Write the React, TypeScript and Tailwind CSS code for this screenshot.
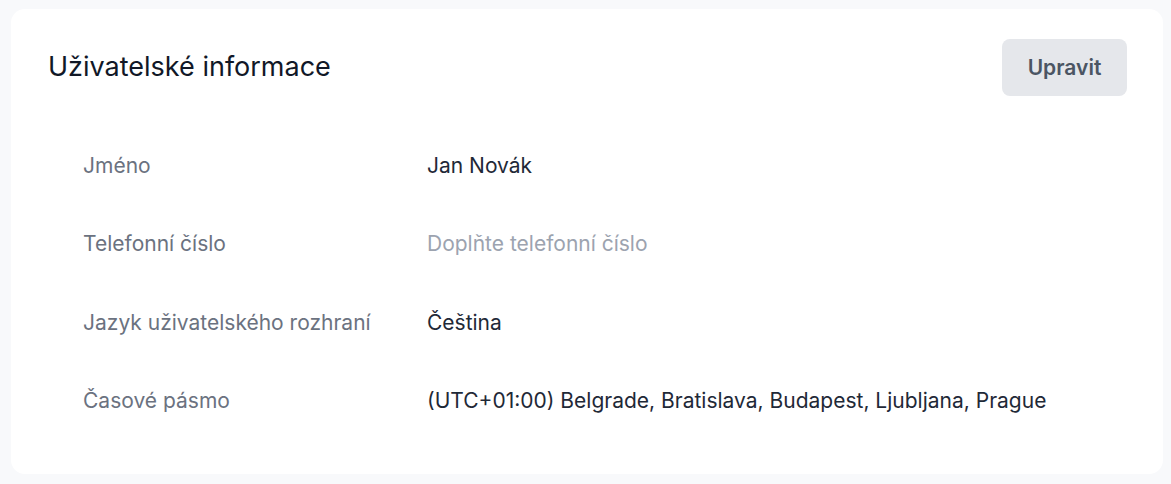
export default function App() {
  const rows: { label: string; value: string; placeholder?: boolean }[] = [
    { label: "Jméno", value: "Jan Novák" },
    { label: "Telefonní číslo", value: "Doplňte telefonní číslo", placeholder: true },
    { label: "Jazyk uživatelského rozhraní", value: "Čeština" },
    { label: "Časové pásmo", value: "(UTC+01:00) Belgrade, Bratislava, Budapest, Ljubljana, Prague" },
  ];

  return (
    <div
      className="min-h-screen bg-[#f8f9fb] pl-[11px] pr-[8px] pt-[9px] pb-[11px]"
      style={{ fontFamily: "Inter, 'Noto Sans', sans-serif" }}
    >
      <div className="rounded-[14px] bg-white pl-[37px] pr-[36px] pt-[30px] pb-[34px]">
        <div className="flex items-center justify-between">
          <h2 className="text-[27px] font-normal text-[#111827]">Uživatelské informace</h2>
          <button className="h-[57px] w-[125px] rounded-[8px] bg-[#e5e7eb] text-[21px] font-semibold text-[#4b5563]">
            Upravit
          </button>
        </div>

        <div className="mt-[30px] pl-[35px]">
          {rows.map((row) => (
            <div key={row.label} className="flex h-[78.5px] items-center text-[21px]">
              <span className="w-[344px] shrink-0 text-[#6b7280]">{row.label}</span>
              <span className={row.placeholder ? "text-[#9ca3af]" : "text-[#1f2937]"}>{row.value}</span>
            </div>
          ))}
        </div>
      </div>
    </div>
  );
}
